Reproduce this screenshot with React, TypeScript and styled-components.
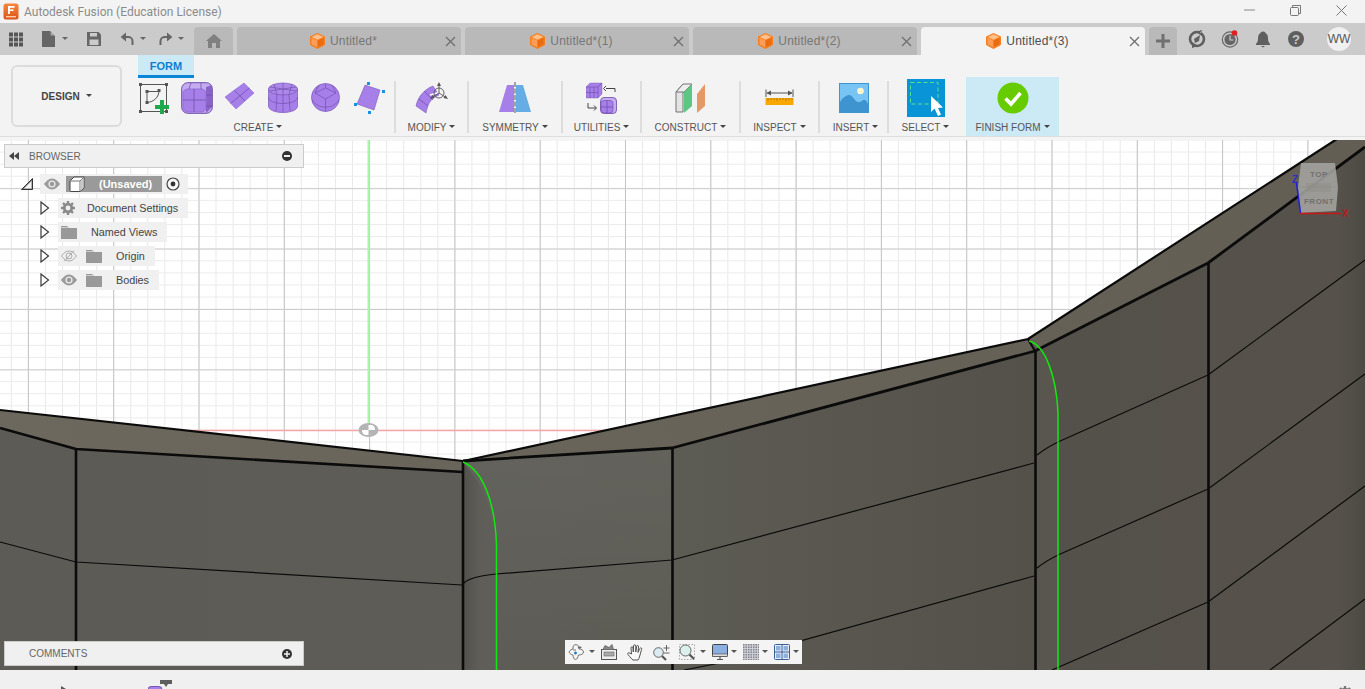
import React from "react";
import styled, { createGlobalStyle } from "styled-components";

const Global = createGlobalStyle`
  html, body { margin: 0; padding: 0; background: #f3f3f3; }
  * { box-sizing: border-box; }
  svg { display: block; flex: none; }
`;

const Shell = styled.div`
  width: 100vw; height: 100vh; overflow: hidden; display: flex; flex-direction: column;
  font-family: "Liberation Sans", Arial, sans-serif; background: #f3f3f3;
`;
const TitleBar = styled.div`
  height: 23px; flex: none; display: flex; align-items: center; padding-left: 3px; background: #f3f3f3;
`;
const TitleText = styled.span`
  margin-left: 5px; font: 12px Roboto, sans-serif; color: #8b8b8b;
`;
const WinControls = styled.div`margin-left: auto; margin-right: 1px; display: flex; align-self: flex-start;`;
const WinButton = styled.div`width: 46px; height: 20px; display: flex; align-items: center; justify-content: center;`;

const TabBar = styled.div`height: 32px; flex: none; background: #cbcbcb; display: flex; align-items: flex-end; padding-left: 9px;`;
const QuickGroup = styled.div<{ $mr: number; $gap?: number }>`
  display: flex; align-items: center; gap: ${p => p.$gap ?? 0}px; margin-right: ${p => p.$mr}px; height: 32px;
`;
const HomeTab = styled.div`
  width: 39px; height: 28px; margin-right: 4px; background: #b9b9b9; border-radius: 4px 4px 0 0;
  display: flex; align-items: center; justify-content: center;
`;
const Tab = styled.div<{ $active?: boolean }>`
  width: 224px; height: 28px; margin-right: 4px; border-radius: 4px 4px 0 0; display: flex; align-items: center;
  padding: 0 5px 0 5px; background: ${p => (p.$active ? "#f3f3f3" : "#b9b9b9")};
  color: ${p => (p.$active ? "#4d4d4d" : "#767676")}; font-size: 12px;
`;
const TabLabel = styled.div`flex: 1; display: flex; align-items: center; justify-content: center; gap: 5px; letter-spacing: 0.2px;`;
const PlusTab = styled.div`
  width: 28px; height: 28px; background: #b9b9b9; border-radius: 4px 4px 0 0; display: flex; align-items: center; justify-content: center;
`;
const StatusIcons = styled.div`height: 32px; display: flex; align-items: center; gap: 15px; margin-left: 11px;`;
const Avatar = styled.div`
  width: 24px; height: 24px; margin-left: 7px; border-radius: 50%; background: #f0f0f0; color: #555;
  font-size: 12px; display: flex; align-items: center; justify-content: center;
`;

const Ribbon = styled.div`
  height: 82px; flex: none; display: flex; background: #f3f3f3; border-bottom: 1px solid #dedede; padding-left: 11px;
`;
const DesignButton = styled.div`
  width: 111px; height: 62px; margin: 10px 11px 0 0; border: 2px solid #dcdcdc; border-radius: 6px; background: #f3f3f3;
  display: flex; align-items: center; justify-content: center; gap: 6px;
  font-size: 10px; font-weight: 700; color: #444;
`;
const RibbonBody = styled.div`display: flex; flex-direction: column;`;
const FormTab = styled.div`
  width: 56px; height: 23px; margin-left: 5px; flex: none; background: #cce9f6; border-bottom: 3px solid #0a86d8;
  color: #0b7fd1; font-size: 11px; font-weight: 700; display: flex; align-items: center; justify-content: center; padding-top: 2px;
`;
const Tools = styled.div`display: flex; height: 59px; margin-top: -1px;`;
const Section = styled.div<{ $w: number; $active?: boolean; $pr?: number; $ml?: number }>`
  width: ${p => p.$w}px; padding-right: ${p => p.$pr ?? 0}px; margin-left: ${p => p.$ml ?? 0}px;
  display: flex; flex-direction: column; align-items: center; flex: none;
  background: ${p => (p.$active ? "#cce9f6" : "transparent")};
`;
const IconRow = styled.div`height: 42px; display: flex; align-items: center; justify-content: center; gap: 11px;`;
const ToolLabel = styled.div<{ $mr?: number }>`
  display: flex; align-items: center; gap: 3px; height: 16px; font-size: 10px; color: #555; margin-right: ${p => p.$mr ?? 0}px;
`;
const Sep = styled.div`width: 2px; height: 52px; margin-top: 4px; background: #dddddd; flex: none;`;
const Caret = styled.span<{ $size?: number; $color?: string }>`
  display: inline-block; flex: none; width: 0; height: 0;
  border-left: ${p => p.$size ?? 3}px solid transparent; border-right: ${p => p.$size ?? 3}px solid transparent;
  border-top: ${p => p.$size ?? 3}px solid ${p => p.$color ?? "#444"};
  margin-bottom: 2px;
`;

const Viewport = styled.div`flex: 1; position: relative; background: #fff; overflow: hidden;`;
const Scene = styled.svg`position: absolute; left: 0; top: 0;`;
const TopStrip = styled.div`position: absolute; left: 0; top: 0; right: 0; height: 3px; background: #f4f4f4;`;
const Panel = styled.div<{ $top: number; $h: number }>`
  position: absolute; left: 4px; top: ${p => p.$top}px; width: 300px; height: ${p => p.$h}px; background: #f0f0f0;
  border: 1px solid #cbcbcb; display: flex; align-items: center; font-size: 10px; color: #666;
`;
const PanelLead = styled.div`width: 24px; padding-left: 4px; display: flex; align-items: center;`;
const PanelRight = styled.div`margin-left: auto; margin-right: 11px; display: flex;`;
const Tree = styled.div`position: absolute; left: 0; top: 37px; display: flex; flex-direction: column; gap: 4px;`;
const TreeRow = styled.div<{ $indent: number; $lead: number }>`
  display: flex; height: 20px; align-items: center; margin-left: ${p => p.$indent}px;
  & > svg:first-child { margin-right: ${p => p.$lead}px; }
`;
const RowBody = styled.div`
  height: 20px; background: #f0f0f0; display: flex; align-items: center; padding: 0 10px 0 3px; font-size: 10.8px; color: #444;
`;
const RootBody = styled(RowBody)`padding: 0 8px 0 4px; width: 148px;`;
const RootLabel = styled.div`
  margin: 0 4px 0 6px; width: 98px; height: 16px; background: #9a9a9a; display: flex; align-items: center; padding-left: 3px;
  color: #fff; font-weight: 700; font-size: 11px;
`;
const RootName = styled.span`margin-left: 14px;`;
const RowText = styled.span<{ $ml: number }>`margin-left: ${p => p.$ml}px;`;
const RowIcon = styled.div<{ $ml?: number }>`margin-left: ${p => p.$ml ?? 0}px;`;

const NavBar = styled.div`
  position: absolute; left: 565px; top: 503px; width: 237px; height: 24px; background: #f4f4f4;
  display: flex; align-items: center; padding-left: 3px;
`;
const NavItem = styled.div<{ $ml?: number }>`display: flex; align-items: center; margin-left: ${p => p.$ml ?? 0}px;`;
const BottomBar = styled.div`height: 19px; flex: none; background: #f0f0f0; display: flex; padding-left: 60px; overflow: hidden;`;
const Marker = styled.div`margin-left: 80px;`;
const BottomGear = styled.div`margin: 16px 13px 0 auto;`;

const P = "#a77fe8", PD = "#7a55b8", PL = "#c5abf0", PE = "#6c4aa8";

const Logo = () => (
  <svg width="16" height="17" viewBox="0 0 16 17">
    <defs><linearGradient id="lg" x1="0" y1="0" x2="0" y2="1"><stop offset="0" stopColor="#f8873a" /><stop offset="1" stopColor="#d9561a" /></linearGradient></defs>
    <rect x="0.5" y="0.5" width="15" height="16" rx="2.5" fill="url(#lg)" />
    <rect x="5" y="3" width="6.5" height="1.8" fill="#fff" />
    <rect x="5" y="3" width="1.9" height="8" fill="#fff" />
    <rect x="5" y="6.4" width="5.5" height="1.6" fill="#fff" />
    <rect x="3" y="13" width="10" height="1.4" fill="#ffc9a8" />
  </svg>
);
const TabCube = () => (
  <svg width="15" height="16" viewBox="0 0 15 16">
    <path d="M7.5 .5 14.5 3.8V11.8L7.5 15.5.5 11.8V3.8Z" fill="#f57f20" stroke="#f57f20" strokeLinejoin="round" />
    <path d="M7.5 1.3 13.3 4 7.5 6.8 1.7 4Z" fill="#ffc08c" />
    <path d="M1.5 4.8 7 7.5V14L1.5 11.2Z" fill="#fd9d57" />
    <path d="M8 7.5 13.5 4.8V11.2L8 14Z" fill="#ea6c12" />
  </svg>
);
const Close = () => (
  <svg width="11" height="11" viewBox="0 0 11 11"><path d="M1 1 10 10M10 1 1 10" stroke="#6f6f6f" strokeWidth="1.3" /></svg>
);
const AppGrid = () => (
  <svg width="14" height="15" viewBox="0 0 14 15" fill="#565656">
    {[0, 5, 10].flatMap(x => [0, 5, 10].map(y => <rect key={`${x}${y}`} x={x} y={y + .5} width="4" height="4" />))}
  </svg>
);
const FileIcon = () => <svg width="13" height="16" viewBox="0 0 13 16"><path d="M0 0H8L13 5V16H0Z" fill="#666" /><path d="M8.6 .3V4.4H12.7" fill="#aaa" /></svg>;
const SaveIcon = () => (
  <svg width="14" height="14" viewBox="0 0 14 14"><path d="M0 0H11.5L14 2.5V14H0Z" fill="#666" /><rect x="3" y="1" width="7" height="3.5" fill="#cbcbcb" /><rect x="2.5" y="7.5" width="9" height="5.5" fill="#cbcbcb" /></svg>
);
const UndoSvg = styled.svg<{ $flip?: boolean }>`transform: ${p => (p.$flip ? "scaleX(-1)" : "none")};`;
const Undo = ({ flip }: { flip?: boolean }) => (
  <UndoSvg $flip={flip} width="14" height="14" viewBox="0 0 14 14">
    <path d="M2 5H8.5C11 5 12.5 7 12.5 9.3V13" fill="none" stroke="#666" strokeWidth="2" />
    <path d="M6 .6V9.4L.6 5Z" fill="#666" />
  </UndoSvg>
);
const Home = () => (
  <svg width="16" height="14" viewBox="0 0 16 14"><path d="M8 0 16 7H14V14H10V9H6V14H2V7H0Z" fill="#808080" /></svg>
);
const Plus = () => <svg width="14" height="14" viewBox="0 0 14 14"><path d="M5.5 0h3v5.5H14v3H8.5V14h-3V8.5H0v-3h5.5Z" fill="#707070" /></svg>;
const SyncIcon = () => (
  <svg width="18" height="18" viewBox="0 0 18 18">
    <circle cx="9" cy="9" r="7" fill="none" stroke="#5f5f5f" strokeWidth="2.6" />
    <path d="M8 2 14 0V6ZM10 16 4 18V12Z" fill="#5f5f5f" />
    <path d="M6 9 12 5 11 11 7 13Z" fill="#5f5f5f" />
    <path d="M12.3 2.5 15 1" stroke="#cbcbcb" />
  </svg>
);
const JobIcon = () => (
  <svg width="18" height="18" viewBox="0 0 18 18">
    <circle cx="9" cy="9.5" r="7.7" fill="none" stroke="#666" strokeWidth="1.2" />
    <circle cx="9" cy="9.5" r="5.6" fill="#666" />
    <path d="M9 5.5V10H12.5" fill="none" stroke="#cbcbcb" strokeWidth="1.2" />
    <circle cx="13.5" cy="3" r="2.8" fill="#e02020" />
  </svg>
);
const Bell = () => (
  <svg width="18" height="18" viewBox="0 0 18 18"><path d="M9 1.5C11 1.5 11.5 3 12 3.5 14 4.5 14 7 14 9 14 12 15.5 13 16 14V15H2V14C2.500 13 4 12 4 9 4 7 4 4.500 6 3.500 6.500 3 7 1.500 9 1.500Z" fill="#5f5f5f" /><path d="M7 16H11L9 17.500Z" fill="#5f5f5f" /></svg>
);
const HelpMark = styled.text`font: 700 13px "Liberation Sans", sans-serif; fill: #cbcbcb;`;
const Help = () => (
  <svg width="18" height="18" viewBox="0 0 18 18"><circle cx="9" cy="9" r="8" fill="#5f5f5f" /><HelpMark x="9" y="13.500" textAnchor="middle">?</HelpMark></svg>
);

const SketchIcon = () => (
  <svg width="32" height="32" viewBox="0 0 32 32">
    <g fill="none" stroke="#555" strokeWidth="1">
      <rect x="2.500" y="2.500" width="26" height="27" />
      <path d="M9 20V9.500H20" />
      <path d="M21 8.500C21 15 16 20 9 20.500" />
    </g>
    <g fill="#555">
      {[[1, 1], [27, 1], [1, 28], [27, 28], [7.500, 8], [7.500, 19], [19.500, 7]].map(([x, y]) => <rect key={`${x}-${y}`} x={x} y={y} width="3" height="3" />)}
    </g>
    <path d="M22 18h4v5h5v4h-5v5h-4v-5h-5v-4h5Z" fill="#1fa84e" />
  </svg>
);
const FormBox = () => (
  <svg width="32" height="32" viewBox="0 0 32 32">
    <rect x="0.700" y="0.700" width="30.600" height="30.600" rx="6" fill={PL} stroke={PE} />
    <path d="M25 5 31 3V25L25 31Z" fill="#8a63c8" />
    <rect x="2" y="7" width="23" height="23" rx="4.500" fill={P} stroke="#9670d8" />
    <path d="M13 7V30M2 18H25M10 1 8 7M20 1 20 7M25 13H31M25 24H31" stroke={PE} strokeWidth=".7" />
  </svg>
);
const PlaneIcon = () => (
  <svg width="32" height="32" viewBox="0 0 32 32">
    <path d="M1 15 20 1 30 11 12 27Z" fill={P} stroke="#9168d8" strokeWidth=".6" />
    <path d="M10 8 21 19M25.500 6 6.500 21.500" stroke={PE} strokeWidth=".7" />
  </svg>
);
const CylIcon = () => (
  <svg width="32" height="32" viewBox="0 0 32 32">
    <path d="M1.500 7V24C1.500 28 8 30.500 16 30.500S30.500 28 30.500 24V7Z" fill={P} stroke={PD} strokeWidth=".7" />
    <ellipse cx="16" cy="7" rx="14.500" ry="6" fill="#ad88ea" stroke={PD} strokeWidth=".7" />
    <path d="M1.500 15C1.500 19 8 21.500 16 21.500S30.500 19 30.500 15M16 1V30M7 2 10 12.500 9 29M25 2 22 12.500 23 29M3 5 29 9M29 5 3 9" fill="none" stroke={PE} strokeWidth=".6" />
  </svg>
);
const SphereIcon = () => (
  <svg width="32" height="32" viewBox="0 0 32 32">
    <circle cx="15.500" cy="15.500" r="14" fill={P} stroke={PD} strokeWidth=".7" />
    <path d="M15.500 17 5 11M15.500 17 26 11M15.500 17V29.500M5 11 15.500 6 26 11M15.500 1.500V6M2 18C7 24 10 25 15.500 25S24 24 29 18M9 3 5 11M22 3 26 11" fill="none" stroke={PE} strokeWidth=".6" />
  </svg>
);
const QuadIcon = () => (
  <svg width="32" height="32" viewBox="0 0 32 32">
    <path d="M12 3 27 8 21 28 4 22Z" fill={P} stroke={PE} strokeWidth=".5" strokeLinejoin="round" />
    <g fill="#1a90e0">
      <rect x="14" y="0" width="3" height="3" /><rect x="29" y="8" width="3" height="3" />
      <rect x="15" y="29" width="3" height="3" /><rect x="1" y="21" width="3" height="3" />
    </g>
  </svg>
);
const ModifyIcon = () => (
  <svg width="34" height="32" viewBox="0 0 34 32">
    <path d="M1 24C3 14 10 7 18 4L24 13C17 16 13 20 11 31Z" fill={P} stroke={PE} strokeWidth=".5" />
    <path d="M4 17 13 24M9 9 18 18" stroke={PE} strokeWidth=".7" />
    <path d="M15 13 24 10.500" stroke="#fff" strokeWidth="1.500" />
    <g fill="none" stroke="#555" strokeWidth=".9">
      <circle cx="24" cy="11" r="5" />
      <path d="M24 2V11L17 15.500M24 11 31 15.500" />
    </g>
    <path d="M24 0 26 4H22ZM33 17 28.500 16 30.500 13ZM15 17 19.500 16 17.500 13Z" fill="#555" />
  </svg>
);
const SymIcon = () => (
  <svg width="32" height="32" viewBox="0 0 32 32">
    <path d="M0 30 8 3H15V30Z" fill={P} />
    <path d="M17 3H24L32 30H17Z" fill="#66ade6" />
    <path d="M16 0V32" stroke="#555" strokeWidth="1" strokeDasharray="5 1.500" />
  </svg>
);
const UtilIcon = () => (
  <svg width="32" height="32" viewBox="0 0 32 32">
    <path d="M0 5 4 1H16V12L12 16H0Z" fill={P} stroke={PD} strokeWidth=".4" />
    <path d="M0 5H12V16M12 5 16 1M4 5V16M8 5V16M0 10.500H12" fill="none" stroke={PE} strokeWidth=".6" />
    <rect x="14.500" y="15.500" width="16" height="16" rx="3.500" fill={PL} stroke={PE} strokeWidth=".8" />
    <rect x="15" y="18.500" width="12" height="12.500" rx="3" fill={P} stroke={PE} strokeWidth=".6" />
    <path d="M21 18.500V31M15 25H27" stroke={PE} strokeWidth=".7" />
    <path d="M29 6.500H20M29 6.500V10M20 4 17.500 6.500 20 9" fill="none" stroke="#444" strokeWidth="1" />
    <path d="M2 21V26H10M8 23.500 10.500 26 8 28.500" fill="none" stroke="#444" strokeWidth="1" />
  </svg>
);
const ConstructIcon = () => (
  <svg width="32" height="32" viewBox="0 0 32 32">
    <path d="M1 10 8 2V30H1Z" fill="#e3e3e3" stroke="#666" strokeWidth=".9" />
    <path d="M1 10 8 2H17L9 10Z" fill="#eee" stroke="#666" strokeWidth=".9" />
    <path d="M9 10 17 2V24L9 31Z" fill="#5ec683" />
    <path d="M22 12 30 2V24L22 31Z" fill="#e59a66" />
  </svg>
);
const InspectIcon = () => (
  <svg width="30" height="32" viewBox="0 0 30 32">
    <rect x="0.500" y="16" width="28" height="7" fill="#f9a800" />
    <path d="M3 16v3M6 16v2M9 16v2M12 16v3M15 16v2M18 16v2M21 16v3M24 16v2M27 16v2" stroke="#9c6c00" strokeWidth=".7" />
    <path d="M1 7.500V15M28 7.500V15M2 11H27" stroke="#555" strokeWidth="1" />
    <path d="M1.500 11 6 8.500V13.500ZM27.500 11 23 8.500V13.500Z" fill="#555" />
  </svg>
);
const InsertIcon = () => (
  <svg width="30" height="30" viewBox="0 0 30 30">
    <rect x="0.500" y="0.500" width="29" height="29" fill="#78c4f4" stroke="#3f96cf" />
    <circle cx="21.500" cy="8" r="3.300" fill="#fff7c8" />
    <path d="M1 29V19C4 14 8 12 10 12 14 12 15 18 19 19 22 20 24 16 26 17 28 18 29 21 29 21V29Z" fill="#3e94cf" />
  </svg>
);
const SelectIcon = () => (
  <svg width="38" height="38" viewBox="0 0 38 38">
    <rect width="38" height="38" fill="#0a94d8" />
    <rect x="3.500" y="3.500" width="27.500" height="21.500" fill="none" stroke="#5be08a" strokeWidth="1" strokeDasharray="4 2.500" />
    <path d="M24 17V33L27.500 29.500 31 37 34 35.500 31 29 36 28.500Z" fill="#fff" />
  </svg>
);
const FinishIcon = () => (
  <svg width="32" height="32" viewBox="0 0 32 32">
    <circle cx="16" cy="16" r="15.500" fill="#66cc00" />
    <path d="M8.500 16.500 14 22 23.500 11" fill="none" stroke="#fff" strokeWidth="3.600" />
  </svg>
);

const Expander = () => (
  <svg width="10" height="14" viewBox="0 0 10 14"><path d="M1 1 8.500 7 1 13Z" fill="#fff" stroke="#3c3c3c" strokeWidth="1.200" /></svg>
);
const RootTri = () => (
  <svg width="12" height="12" viewBox="0 0 12 12"><path d="M0.500 11.500 11.500 .5V11.500Z" fill="#777" /><path d="M3 10.500 10.500 3V10.500Z" fill="#f4f4f4" /><path d="M0.500 11.500 11.500 .5V11.500Z" fill="none" stroke="#333" /></svg>
);
const Eye = ({ off, c = "#9a9a9a" }: { off?: boolean; c?: string }) => (
  <svg width="16" height="12" viewBox="0 0 16 12">
    <path d="M.5 6C3 2.500 5.500 1 8 1S13 2.500 15.500 6C13 9.500 10.500 11 8 11S3 9.500 .5 6Z" fill={off ? "none" : c} stroke={off ? "#aaa" : c} />
    {off ? <><circle cx="8" cy="6" r="3" fill="none" stroke="#aaa" /><path d="M3 11.500 13 .5" stroke="#aaa" /></> : <><circle cx="8" cy="6" r="3.600" fill="#e8e8e8" /><circle cx="8" cy="6" r="2.200" fill={c} /></>}
  </svg>
);
const Folder = () => <svg width="16" height="14" viewBox="0 0 16 14"><path d="M0 1H6L8 3H16V14H0Z" fill="#999" /><path d="M0 2.500H7" stroke="#f0f0f0" strokeWidth=".6" /></svg>;
const Gear = ({ s = 14, c = "#8a8a8a" }: { s?: number; c?: string }) => (
  <svg width={s} height={s} viewBox="0 0 14 14">
    <circle cx="7" cy="7" r="3.800" fill="none" stroke={c} strokeWidth="2.800" />
    <g stroke={c} strokeWidth="2.400">
      <path d="M7 0V3M7 11V14M0 7H3M11 7H14M2 2 4 4M10 10 12 12M12 2 10 4M4 10 2 12" />
    </g>
  </svg>
);
const DocCube = () => (
  <svg width="16" height="16" viewBox="0 0 16 16">
    <path d="M1 5 5 1H15V12L11 15.500H2Q1 15.500 1 14.500Z" fill="#fff" stroke="#444" />
    <path d="M1 5H11V15.500M11 5 15 1" fill="none" stroke="#777" />
    <path d="M11.500 5.500 14.500 2V11.500L11.500 14.500Z" fill="#c8c8c8" />
  </svg>
);
const Radio = () => <svg width="14" height="14" viewBox="0 0 14 14"><circle cx="7" cy="7" r="6" fill="#f7f7f7" stroke="#444" strokeWidth="1.200" /><circle cx="7" cy="7" r="2.400" fill="#333" /></svg>;
const DoubleLeft = () => <svg width="10" height="8" viewBox="0 0 10 8"><path d="M5 0V8L0 4ZM10 0V8L5 4Z" fill="#444" /></svg>;
const Minus = () => <svg width="10" height="10" viewBox="0 0 10 10"><circle cx="5" cy="5" r="5" fill="#333" /><rect x="2" y="4" width="6" height="2" fill="#f0f0f0" /></svg>;
const PlusCircle = () => <svg width="10" height="10" viewBox="0 0 10 10"><circle cx="5" cy="5" r="5" fill="#333" /><path d="M2 5H8M5 2V8" stroke="#f0f0f0" strokeWidth="1.500" /></svg>;

const Orbit = () => (
  <svg width="16" height="16" viewBox="0 0 16 16" fill="none" stroke="#555" strokeWidth=".8">
    <path d="M5 3C5 1 8 0 9.500 1 11 2 10 4 11 5 13 5 15.500 6 15.500 8S13 11 10.500 11C10 13 9 15.500 7.500 15.500S5 13 5 11C3 10.500 2 10 1 8 2 6 4 5 5 5Z" />
    <path d="M5 6H8" />
    <path d="M6 9H9M7.500 7.500V10.500" stroke="#1a7fd0" strokeWidth="1.300" />
    <path d="M12 2V5M10.500 3.500H13.500" stroke="#555" />
  </svg>
);
const Clapper = () => (
  <svg width="16" height="16" viewBox="0 0 16 16">
    <rect x="0.500" y="5.500" width="15" height="10" fill="#eee" stroke="#555" />
    <rect x="3" y="8" width="10" height="4" fill="#aaa" stroke="#666" strokeWidth=".6" />
    <path d="M2 5.500 4 1.500 8 3.500 11 .5 12.500 5.500" fill="#888" stroke="#555" strokeWidth=".7" />
  </svg>
);
const Hand = () => (
  <svg width="16" height="17" viewBox="0 0 16 17">
    <path d="M4.500 10 4 4Q4 2.800 5 2.800T6 4L6.300 8 6.500 2Q6.700 .8 7.700 .8T8.800 2L8.800 8 9.500 2.500Q9.800 1.400 10.700 1.500T11.500 3L11 8.500 12.800 4.500Q13.500 3.500 14.300 4T14.500 5.500L13 11Q12 15 11 16H6C4.500 15 3.500 13.500 1 10.500 .3 9.500 1 8.500 2 8.800Z" fill="#f8f8f8" stroke="#444" strokeWidth=".9" />
  </svg>
);
const ZoomMag = () => (
  <svg width="17" height="17" viewBox="0 0 17 17">
    <circle cx="5.500" cy="8.500" r="4.800" fill="#dcebef" stroke="#666" />
    <path d="M9 12 13 16" stroke="#555" strokeWidth="2.200" />
    <path d="M13.500 1V7M10.500 4H16.500M10.500 9H16.500" stroke="#555" strokeWidth=".9" />
  </svg>
);
const ZoomFit = () => (
  <svg width="16" height="16" viewBox="0 0 16 16">
    <rect x="0.500" y="0.500" width="15" height="15" fill="none" stroke="#888" strokeWidth=".7" strokeDasharray="1.500 1.500" />
    <circle cx="6.500" cy="6.500" r="5.500" fill="#dcf0ee" stroke="#666" />
    <path d="M10.500 10.500 15 15" stroke="#555" strokeWidth="2.200" />
  </svg>
);
const Monitor = () => (
  <svg width="16" height="16" viewBox="0 0 16 16">
    <rect x="0.500" y="0.500" width="15" height="12" rx="1" fill="#8bafe0" stroke="#444" />
    <rect x="0.500" y="10" width="15" height="2.500" fill="#ddd" stroke="#444" strokeWidth=".6" />
    <path d="M5 15.500H11M8 12.500V15" stroke="#555" strokeWidth="1.200" />
  </svg>
);
const GridIcon = () => (
  <svg width="16" height="16" viewBox="0 0 16 16">
    <rect width="16" height="16" fill="#85858e" />
    {[1.500, 4, 6.500, 9, 11.500, 14].flatMap(i => [<rect key={`v${i}`} x={i} width="1" height="16" fill="#cfcfd8" />, <rect key={`h${i}`} y={i} width="16" height="1" fill="#cfcfd8" />])}
  </svg>
);
const Viewports = () => (
  <svg width="16" height="16" viewBox="0 0 16 16">
    <rect x="0.500" y="0.500" width="15" height="15" rx="1" fill="#e8f0fa" stroke="#3a5d92" />
    <path d="M8 0V16M0 8H16" stroke="#3a5d92" />
    <rect x="2" y="2" width="4.500" height="4.500" fill="#8bb0dd" /><rect x="9.500" y="2" width="4.500" height="4.500" fill="#8bb0dd" />
    <rect x="2" y="9.500" width="4.500" height="4.500" fill="#8bb0dd" /><rect x="9.500" y="9.500" width="4.500" height="4.500" fill="#8bb0dd" />
  </svg>
);

const CubeText = styled.text`font: 700 8px "Liberation Sans", sans-serif; fill: #707070; letter-spacing: .5px;`;
const AxisText = styled.text`font: 700 10px "Liberation Sans", sans-serif;`;

const majorX = Array.from({ length: 16 }, (_, i) => 28.4 + i * 85.3);
const minorX = Array.from({ length: 81 }, (_, i) => 11.3 + i * 17.06);
const majorY = [188.7, 249.1, 309.5, 369.9];
const minorY = Array.from({ length: 30 }, (_, i) => 140 + i * 12.08);

const Viewscape = () => (
  <Scene width="1365" height="533" viewBox="0 137 1365 533">
    <defs>
      <linearGradient id="face" x1="0" y1="0" x2="1365" y2="0" gradientUnits="userSpaceOnUse">
        <stop offset="0" stopColor="#5c5b55" />
        <stop offset=".34" stopColor="#5d5c56" />
        <stop offset=".5" stopColor="#5c5b54" />
        <stop offset=".75" stopColor="#54514a" />
        <stop offset=".98" stopColor="#56524b" />
        <stop offset="1" stopColor="#4d4a44" />
      </linearGradient>
      <linearGradient id="top" x1="0" y1="460" x2="1365" y2="137" gradientUnits="userSpaceOnUse">
        <stop offset="0" stopColor="#6d685d" />
        <stop offset="1" stopColor="#625e53" />
      </linearGradient>
      <linearGradient id="fillet" x1="463" y1="0" x2="490" y2="0" gradientUnits="userSpaceOnUse">
        <stop offset="0" stopColor="#53514c" />
        <stop offset=".6" stopColor="#5f5d58" />
        <stop offset="1" stopColor="#5f5e58" />
      </linearGradient>
      <linearGradient id="lift" x1="0" y1="460" x2="0" y2="670" gradientUnits="userSpaceOnUse">
        <stop offset="0" stopColor="#6a6a64" stopOpacity=".45" />
        <stop offset="1" stopColor="#6a6a64" stopOpacity="0" />
      </linearGradient>
    </defs>
    {minorX.map(x => <line key={`mx${x}`} x1={x} x2={x} y1="137" y2="670" stroke="#e9e9e9" />)}
    {minorY.map(y => <line key={`my${y}`} x1="0" x2="1365" y1={y} y2={y} stroke="#ececec" />)}
    {majorX.map(x => <line key={`Mx${x}`} x1={x} x2={x} y1="137" y2="670" stroke="#c4c4c4" />)}
    {majorY.map(y => <line key={`My${y}`} x1="0" x2="1365" y1={y} y2={y} stroke="#cccccc" />)}
    <line x1="368.500" x2="368.500" y1="137" y2="430" stroke="#a8f7a8" strokeWidth="2" />
    <line x1="190" x2="610" y1="430.500" y2="430.500" stroke="#f6a6a6" strokeWidth="1.300" />
    <ellipse cx="368.500" cy="430" rx="10" ry="7" fill="#b4b4b4" />
    <path d="M368.500 425H372Q375 426 375 430H368.500ZM368.500 435H365Q362 434 362 430H368.500Z" fill="#fff" />

    <path d="M0 410 463 461 463 472 76 449 0 428Z" fill="url(#top)" />
    <path d="M463 461 1028 339 1340 137H1365V147L1208 263 1035 351 672 448Z" fill="url(#top)" />
    <path d="M0 428 76 449 463 472V461L672 448 1035 351 1208 263 1365 147V670H0Z" fill="url(#face)" />
    <path d="M463 461 672 448V670H463Z" fill="url(#lift)" />
    <path d="M464 464C480 480 496 510 498 560V670H464Z" fill="url(#fillet)" />
    <path d="M1028 341 1036 352V670H1060V420C1058 385 1048 352 1028 341Z" fill="#58564f" />

    <g fill="none" stroke="#0b0b0b" strokeLinejoin="round">
      <g strokeWidth="2.200">
        <path d="M0 410 463 461 1028 339 1340 137" />
        <path d="M0 428 76 449 463 472" strokeWidth="2.600" />
        <path d="M463 461 672 448 1035 351 1208 263 1365 147" strokeWidth="2.800" />
        <path d="M1028 339 1035 351" />
      </g>
      <g strokeWidth="2.600">
        <path d="M76 449V670M463 461V670M672.500 448V670M1035.500 351V670M1208.500 263V670" />
      </g>
      <g strokeWidth="1.200">
        <path d="M0 542 76 562 462 585" />
        <path d="M464 583C468 579 476 576 496 574L672 560 1034 463" />
        <path d="M1037 455C1042 451 1048 447 1058 442L1208 375 1365 260" />
        <path d="M684 670 725 662 1034 576" />
        <path d="M1037 568C1042 564 1048 560 1058 555L1208 489 1365 374" />
        <path d="M1052 670 1208 602 1365 486" />
        <path d="M1270 670 1365 599" />
      </g>
    </g>
    <g fill="none" stroke="#10e810" strokeWidth="1.500">
      <path d="M463 462C482 470 495 500 496.500 545V670" />
      <path d="M1029 341C1045 345 1056 375 1058 412V670" />
    </g>

    <path d="M1301 163H1335L1338 187 1336 211 1300 213 1298 187Z" fill="#a5a4a0" fillOpacity=".88" />
    <path d="M1298 187H1338" stroke="#8f8e89" strokeWidth=".6" />
    <rect x="1306" y="183" width="25" height="9" fill="#8e8d88" fillOpacity=".45" />
    <CubeText x="1319" y="177" textAnchor="middle">TOP</CubeText>
    <CubeText x="1319" y="204" textAnchor="middle">FRONT</CubeText>
    <path d="M1296.500 183 1300.500 213" stroke="#2020d8" strokeWidth="1.600" />
    <path d="M1300 213.500H1341" stroke="#c81818" strokeWidth="1.600" />
    <AxisText x="1292" y="183" fill="#3030c0">Z</AxisText>
    <AxisText x="1342" y="217" fill="#b02020">X</AxisText>
  </Scene>
);

const TabItem = ({ name, active }: { name: string; active?: boolean }) => (
  <Tab $active={active}>
    <TabLabel><TabCube />{name}</TabLabel>
    <Close />
  </Tab>
);

const App = () => (
  <Shell>
    <Global />
    <TitleBar>
      <Logo />
      <TitleText>Autodesk Fusion (Education License)</TitleText>
      <WinControls>
        <WinButton><svg width="11" height="2" viewBox="0 0 11 2"><path d="M0 1H11" stroke="#888" /></svg></WinButton>
        <WinButton>
          <svg width="11" height="11" viewBox="0 0 11 11" fill="none" stroke="#777"><rect x="0.500" y="2.500" width="8" height="8" rx="1" /><path d="M2.500 2.500V.5H10.500V8.500H8.500" /></svg>
        </WinButton>
        <WinButton><svg width="11" height="11" viewBox="0 0 11 11"><path d="M.5 .5 10.500 10.500M10.500 .5 .5 10.500" stroke="#777" /></svg></WinButton>
      </WinControls>
    </TitleBar>

    <TabBar>
      <QuickGroup $mr={19}><AppGrid /></QuickGroup>
      <QuickGroup $mr={19} $gap={7}><FileIcon /><Caret $size={3.500} $color="#666" /></QuickGroup>
      <QuickGroup $mr={19}><SaveIcon /></QuickGroup>
      <QuickGroup $mr={13} $gap={6}><Undo /><Caret $size={3.500} $color="#666" /></QuickGroup>
      <QuickGroup $mr={10} $gap={5}><Undo flip /><Caret $size={3.500} $color="#666" /></QuickGroup>
      <HomeTab><Home /></HomeTab>
      <TabItem name="Untitled*" />
      <TabItem name="Untitled*(1)" />
      <TabItem name="Untitled*(2)" />
      <TabItem name="Untitled*(3)" active />
      <PlusTab><Plus /></PlusTab>
      <StatusIcons>
        <SyncIcon /><JobIcon /><Bell /><Help />
        <Avatar>WW</Avatar>
      </StatusIcons>
    </TabBar>

    <Ribbon>
      <DesignButton>DESIGN <Caret /></DesignButton>
      <RibbonBody>
        <FormTab>FORM</FormTab>
        <Tools>
          <Section $w={261} $pr={4}>
            <IconRow><SketchIcon /><FormBox /><PlaneIcon /><CylIcon /><SphereIcon /><QuadIcon /></IconRow>
            <ToolLabel $mr={7}>CREATE <Caret /></ToolLabel>
          </Section>
          <Sep />
          <Section $w={71}><IconRow><ModifyIcon /></IconRow><ToolLabel>MODIFY <Caret /></ToolLabel></Section>
          <Sep />
          <Section $w={92}><IconRow><SymIcon /></IconRow><ToolLabel>SYMMETRY <Caret /></ToolLabel></Section>
          <Sep />
          <Section $w={77}><IconRow><UtilIcon /></IconRow><ToolLabel>UTILITIES <Caret /></ToolLabel></Section>
          <Sep />
          <Section $w={97}><IconRow><ConstructIcon /></IconRow><ToolLabel>CONSTRUCT <Caret /></ToolLabel></Section>
          <Sep />
          <Section $w={77}><IconRow><InspectIcon /></IconRow><ToolLabel>INSPECT <Caret /></ToolLabel></Section>
          <Sep />
          <Section $w={67}><IconRow><InsertIcon /></IconRow><ToolLabel $mr={-4}>INSERT <Caret /></ToolLabel></Section>
          <Sep />
          <Section $w={73}><IconRow><SelectIcon /></IconRow><ToolLabel>SELECT <Caret /></ToolLabel></Section>
          <Section $w={93} $active $ml={4}><IconRow><FinishIcon /></IconRow><ToolLabel>FINISH FORM <Caret /></ToolLabel></Section>
        </Tools>
      </RibbonBody>
    </Ribbon>

    <Viewport>
      <Viewscape />
      <TopStrip />
      <Panel $top={7} $h={24}>
        <PanelLead><DoubleLeft /></PanelLead>
        BROWSER
        <PanelRight><Minus /></PanelRight>
      </Panel>
      <Tree>
        <TreeRow $indent={21} $lead={7}>
          <RootTri />
          <RootBody>
            <Eye />
            <RootLabel><DocCube /><RootName>(Unsaved)</RootName></RootLabel>
            <Radio />
          </RootBody>
        </TreeRow>
        <TreeRow $indent={40} $lead={8}>
          <Expander />
          <RowBody><Gear /><RowText $ml={12}>Document Settings</RowText></RowBody>
        </TreeRow>
        <TreeRow $indent={40} $lead={8}>
          <Expander />
          <RowBody><Folder /><RowText $ml={14}>Named Views</RowText></RowBody>
        </TreeRow>
        <TreeRow $indent={40} $lead={8}>
          <Expander />
          <RowBody><Eye off /><RowIcon $ml={9}><Folder /></RowIcon><RowText $ml={14}>Origin</RowText></RowBody>
        </TreeRow>
        <TreeRow $indent={40} $lead={8}>
          <Expander />
          <RowBody><Eye /><RowIcon $ml={9}><Folder /></RowIcon><RowText $ml={14}>Bodies</RowText></RowBody>
        </TreeRow>
      </Tree>
      <Panel $top={504} $h={25}>
        <PanelLead />
        COMMENTS
        <PanelRight><PlusCircle /></PanelRight>
      </Panel>
      <NavBar>
        <NavItem><Orbit /></NavItem>
        <NavItem $ml={5}><Caret $color="#555" /></NavItem>
        <NavItem $ml={6}><Clapper /></NavItem>
        <NavItem $ml={10}><Hand /></NavItem>
        <NavItem $ml={10}><ZoomMag /></NavItem>
        <NavItem $ml={9}><ZoomFit /></NavItem>
        <NavItem $ml={5}><Caret $color="#555" /></NavItem>
        <NavItem $ml={6}><Monitor /></NavItem>
        <NavItem $ml={3}><Caret $color="#555" /></NavItem>
        <NavItem $ml={6}><GridIcon /></NavItem>
        <NavItem $ml={3}><Caret $color="#555" /></NavItem>
        <NavItem $ml={6}><Viewports /></NavItem>
        <NavItem $ml={3}><Caret $color="#555" /></NavItem>
      </NavBar>
    </Viewport>

    <BottomBar>
      <svg width="8" height="19" viewBox="0 0 8 19"><path d="M1 16 6 19H1Z" fill="#555" /></svg>
      <Marker>
        <svg width="24" height="19" viewBox="0 0 24 19">
          <rect x="0" y="16.500" width="14" height="8" rx="3" fill={P} stroke={PD} />
          <path d="M12 10H24V14L20 14 18 17 16 14 12 14Z" fill="#5f5f5f" />
        </svg>
      </Marker>
      <BottomGear><Gear s={14} c="#777" /></BottomGear>
    </BottomBar>
  </Shell>
);

export default App;
